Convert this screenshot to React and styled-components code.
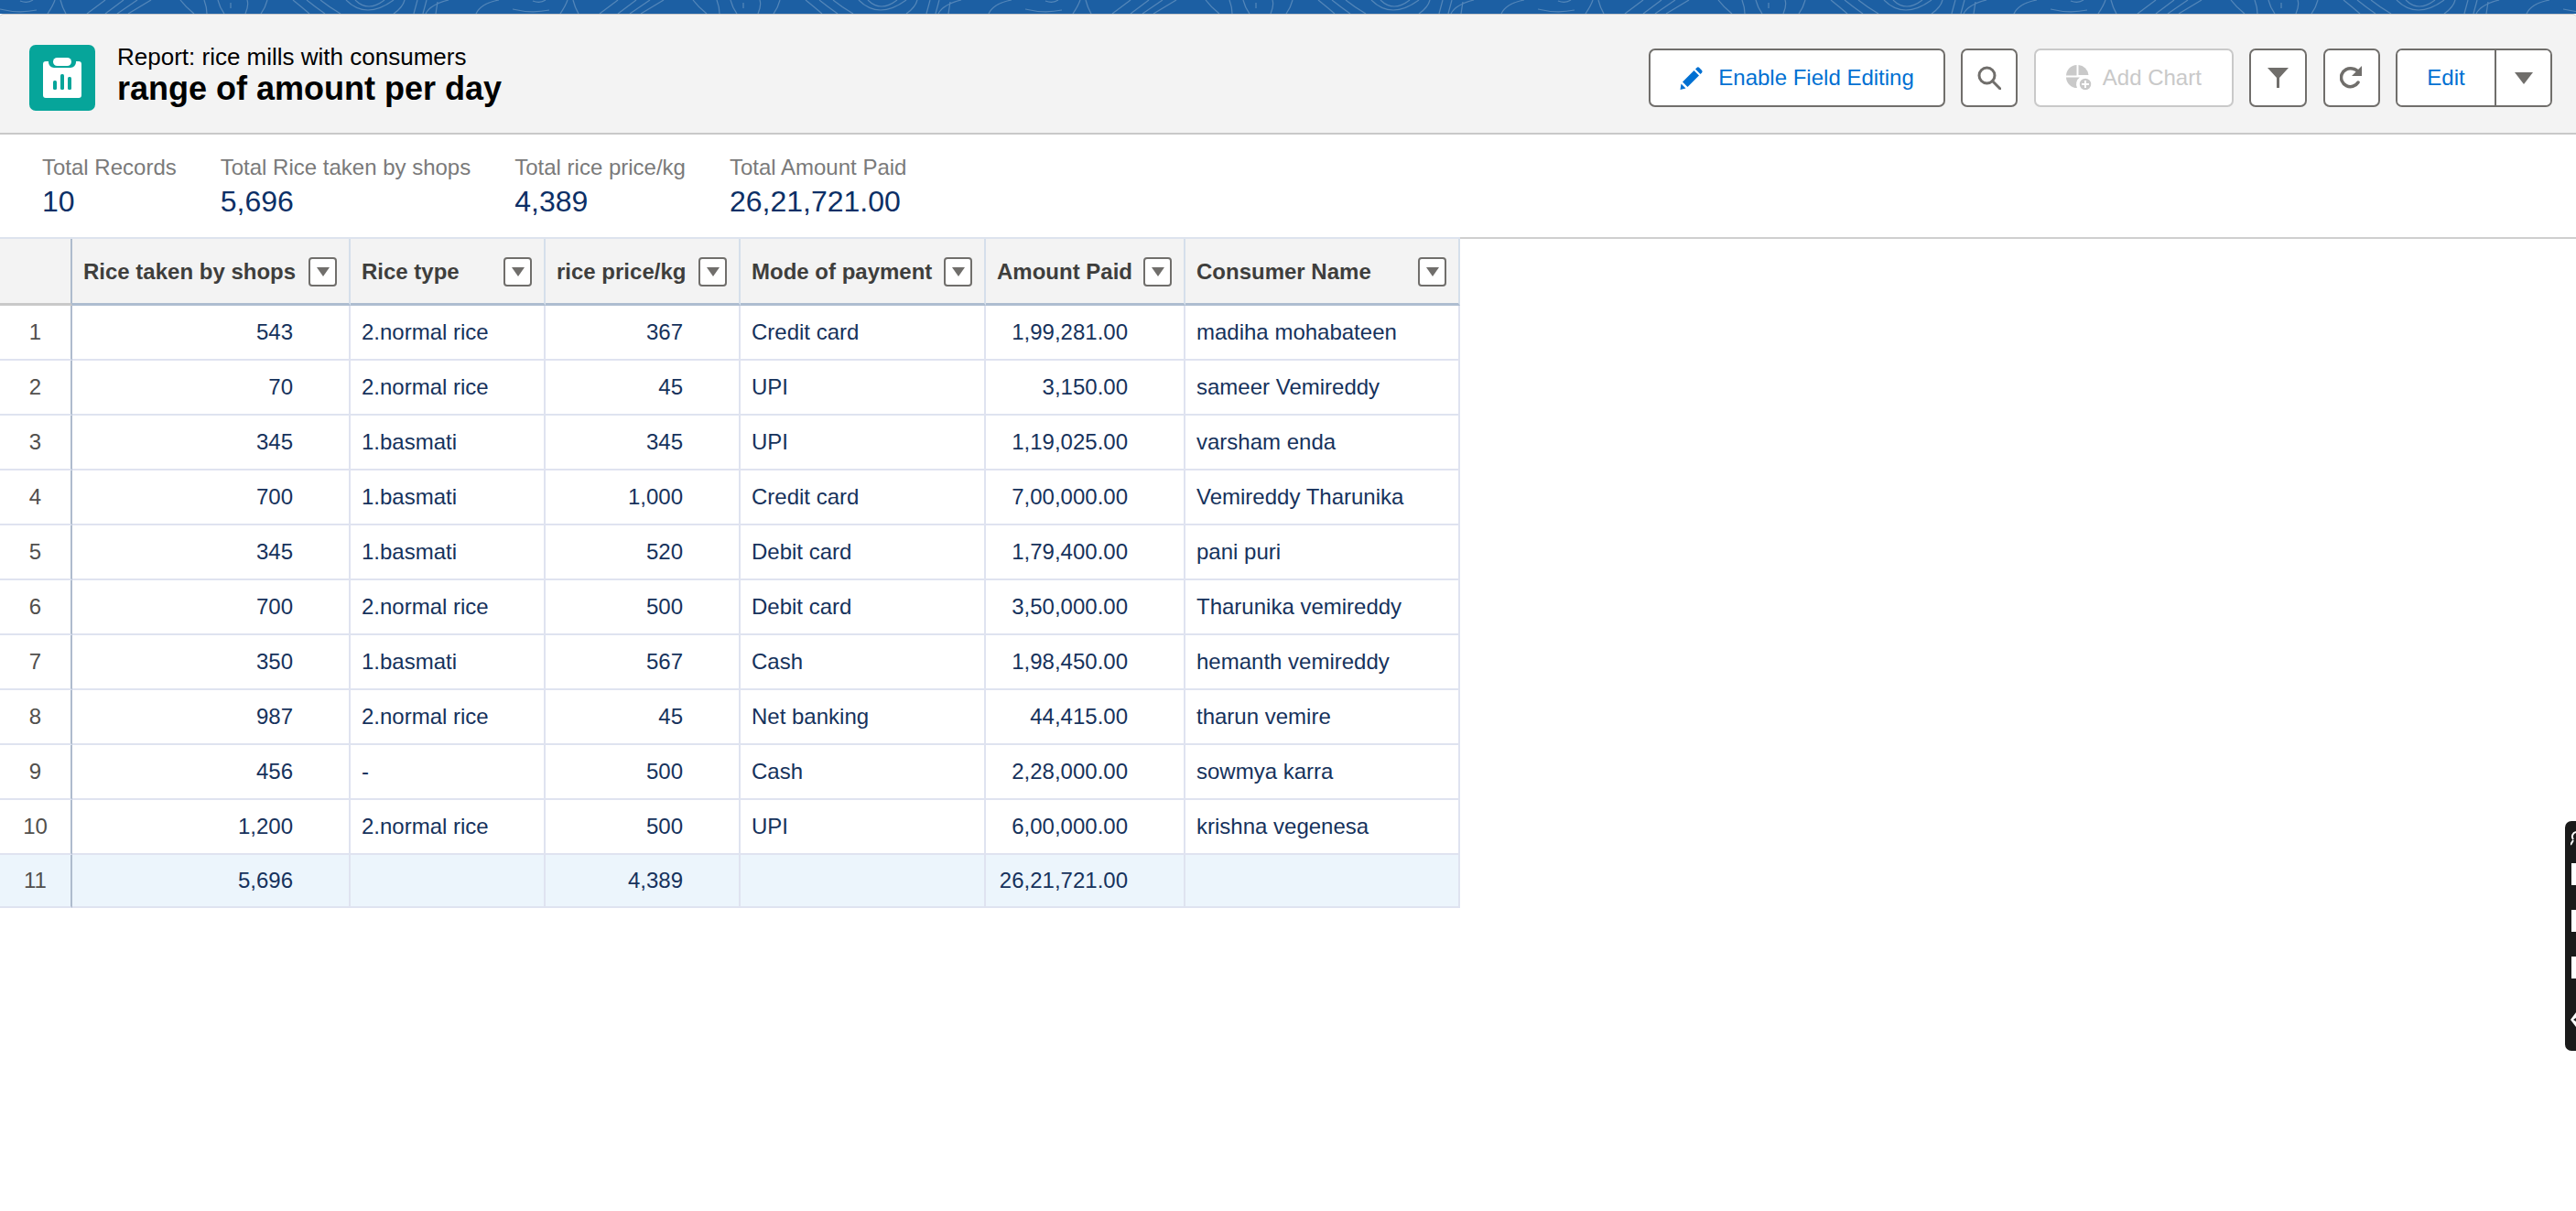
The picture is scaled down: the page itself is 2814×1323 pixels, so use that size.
import React from 'react'
import styled, { createGlobalStyle } from 'styled-components'

const GlobalStyle = createGlobalStyle`
  html, body {
    margin: 0;
    padding: 0;
    background: #fff;
    overflow: hidden;
  }

  body {
    font-family: "Liberation Sans", Arial, sans-serif;
    font-size: 24px;
  }
`

const Page = styled.div`
  position: relative;
  width: 2814px;
  height: 1323px;
  overflow: hidden;
  background: #fff;
`

const Band = styled.svg`
  display: block;
  width: 100%;
  height: 15px;
  background: #1c5fa3;
`

const Header = styled.header`
  display: flex;
  align-items: center;
  justify-content: space-between;
  box-sizing: border-box;
  height: 132px;
  padding: 8px 26px 0 32px;
  background: #f3f3f3;
  border-top: 1px solid #c9c9c9;
  border-bottom: 2px solid #c9c9c9;
  border-radius: 4px 4px 0 0;
`

const TitleBlock = styled.div`
  display: flex;
  align-items: center;
  gap: 24px;
`

const ReportIcon = styled.div`
  display: flex;
  align-items: center;
  justify-content: center;
  width: 72px;
  height: 72px;
  border-radius: 7px;
  background: #06a59a;
`

const TitleText = styled.div`
  display: flex;
  flex-direction: column;
  gap: 2px;
  margin-bottom: 6px;
  color: #000;
`

const Eyebrow = styled.div`
  font-size: 26px;
  line-height: 28px;
`

const Title = styled.h1`
  margin: 0;
  font-size: 36px;
  line-height: 38px;
  font-weight: 700;
`

const Actions = styled.div`
  display: flex;
  gap: 17.4px;
`

const Button = styled.button`
  display: flex;
  align-items: center;
  justify-content: center;
  gap: ${p => p.$gap || 0}px;
  box-sizing: border-box;
  width: ${p => p.$width}px;
  height: 64px;
  padding: 0;
  border: 2px solid ${p => (p.disabled ? '#c9c9c9' : '#706e6b')};
  border-radius: 7px;
  background: #fff;
  color: ${p => (p.disabled ? '#c9c9c9' : '#0070d2')};
  font-family: inherit;
  font-size: 24px;
`

const ButtonGroup = styled.div`
  display: flex;
  box-sizing: border-box;
  width: 171px;
  height: 64px;
  border: 2px solid #706e6b;
  border-radius: 7px;
  background: #fff;
  overflow: hidden;
`

const GroupPart = styled.button`
  display: flex;
  align-items: center;
  justify-content: center;
  flex: ${p => (p.$wide ? '0 0 108px' : '1')};
  padding: 0;
  border: 0;
  border-right: ${p => (p.$wide ? '2px solid #706e6b' : '0')};
  background: #fff;
  color: #0070d2;
  font-family: inherit;
  font-size: 24px;
`

const Stats = styled.section`
  display: flex;
  gap: 48px;
  box-sizing: border-box;
  height: 112px;
  padding: 21px 0 0 46px;
`

const Stat = styled.div`
  display: flex;
  flex-direction: column;
  gap: 3px;
`

const StatLabel = styled.div`
  color: #7a7a7a;
  font-size: 24px;
  line-height: 30px;
`

const StatValue = styled.div`
  color: #0b2f66;
  font-size: 32px;
  line-height: 38px;
`

const TableArea = styled.div`
  border-top: 2px solid #cfcfcf;
`

const Row = styled.div`
  display: grid;
  grid-template-columns: 79px 304px 213px 213px 268px 218px 300px;
  width: 1595px;
  height: ${p => p.$height}px;
  background: ${p => p.$bg || '#fff'};
`

const HeadRow = styled(Row)`
  box-shadow: 0 -2px 0 #dde3ee;
`

const Cell = styled.div`
  display: flex;
  align-items: center;
  justify-content: ${p => (p.$right ? 'flex-end' : 'flex-start')};
  box-sizing: border-box;
  padding: ${p => (p.$right ? '0 61px 1px 0' : '0 0 1px 12px')};
  border-right: 2px solid #dfe3f0;
  border-bottom: 2px solid #dfe3f0;
  color: #16325c;
  font-size: 24px;
`

const RowNumber = styled.div`
  display: flex;
  align-items: center;
  justify-content: center;
  box-sizing: border-box;
  padding-bottom: 1px;
  border-right: 2px solid #aebbcd;
  border-bottom: 2px solid #dfe3f0;
  color: #514f4d;
  font-size: 24px;
`

const HeadCorner = styled.div`
  box-sizing: border-box;
  background: #f3f3f3;
  border-right: 2px solid #aebbcd;
  border-bottom: 3px solid #c9c9c9;
`

const HeadCell = styled.div`
  display: flex;
  align-items: center;
  justify-content: space-between;
  box-sizing: border-box;
  padding: 2px 13px 0 12px;
  background: #f3f3f3;
  border-right: 2px solid #d5dfeb;
  border-bottom: 3px solid #aebdd0;
  color: #3e3e3c;
  font-size: 24px;
  font-weight: 700;
  white-space: nowrap;
`

const MenuButton = styled.span`
  display: flex;
  align-items: center;
  justify-content: center;
  flex: none;
  box-sizing: border-box;
  width: 31px;
  height: 32px;
  border: 2px solid #706e6b;
  border-radius: 4px;
  background: #fff;
`

const Triangle = styled.span`
  width: 0;
  height: 0;
  margin-top: ${p => (p.$big ? 2 : 0)}px;
  border-left: ${p => (p.$big ? 10 : 7)}px solid transparent;
  border-right: ${p => (p.$big ? 10 : 7)}px solid transparent;
  border-top: ${p => (p.$big ? 13 : 10)}px solid #706e6b;
`

const SidePanel = styled.aside`
  position: absolute;
  top: 897px;
  right: 0;
  display: flex;
  flex-direction: column;
  align-items: flex-end;
  box-sizing: border-box;
  width: 12px;
  height: 251px;
  padding-top: 46px;
  border-radius: 7px 0 0 7px;
  background: #1a1a1a;
`

const SideBlock = styled.span`
  display: block;
  width: 5px;
  height: 24px;
  margin-bottom: 27px;
  background: #fff;
`

const SideGlyph = styled.svg`
  position: absolute;
  left: 6px;
  top: ${p => p.$top}px;
  width: 6px;
  height: 16px;
`

const columns = [
  'Rice taken by shops',
  'Rice type',
  'rice price/kg',
  'Mode of payment',
  'Amount Paid',
  'Consumer Name'
]

const rows = [
  ['543', '2.normal rice', '367', 'Credit card', '1,99,281.00', 'madiha mohabateen'],
  ['70', '2.normal rice', '45', 'UPI', '3,150.00', 'sameer Vemireddy'],
  ['345', '1.basmati', '345', 'UPI', '1,19,025.00', 'varsham enda'],
  ['700', '1.basmati', '1,000', 'Credit card', '7,00,000.00', 'Vemireddy Tharunika'],
  ['345', '1.basmati', '520', 'Debit card', '1,79,400.00', 'pani puri'],
  ['700', '2.normal rice', '500', 'Debit card', '3,50,000.00', 'Tharunika vemireddy'],
  ['350', '1.basmati', '567', 'Cash', '1,98,450.00', 'hemanth vemireddy'],
  ['987', '2.normal rice', '45', 'Net banking', '44,415.00', 'tharun vemire'],
  ['456', '-', '500', 'Cash', '2,28,000.00', 'sowmya karra'],
  ['1,200', '2.normal rice', '500', 'UPI', '6,00,000.00', 'krishna vegenesa']
]

const totals = ['5,696', '', '4,389', '', '26,21,721.00', '']
const rightAligned = [true, false, true, false, true, false]

const stats = [
  ['Total Records', '10'],
  ['Total Rice taken by shops', '5,696'],
  ['Total rice price/kg', '4,389'],
  ['Total Amount Paid', '26,21,721.00']
]

const BandPattern = () => (
  <Band aria-hidden="true">
    <defs>
      <pattern id="topo" width="560" height="15" patternUnits="userSpaceOnUse">
        <g fill="none" stroke="#5d8dbd" strokeWidth="1.2" opacity="0.85">
          <path d="M0 10 Q20 15 40 11 M22 1 Q30 4 36 0" />
          <path d="M52 15 Q58 6 60 0 M66 0 Q68 8 72 15" />
          <path d="M95 15 L115 0 M115 15 L135 0 M128 15 L150 0 M140 15 L165 0" />
          <path d="M197 0 Q203 8 212 15 M223 0 Q226 8 226 15 M238 0 Q240 8 245 15" />
          <path d="M252 3 L252 9 M268 15 Q272 6 270 0 M285 15 Q290 8 292 0" />
          <path d="M320 0 Q330 8 338 15 M335 0 Q345 8 355 15 M350 0 Q360 8 372 15" />
          <path d="M378 0 Q400 22 430 0 M388 0 Q402 14 420 0" />
          <path d="M430 15 Q440 8 442 0 M452 15 L456 0 M462 15 L466 0 M476 15 L478 2" />
          <path d="M465 15 Q470 5 490 0 M520 15 Q525 4 545 0" />
        </g>
      </pattern>
    </defs>
    <rect width="100%" height="15" fill="url(#topo)" />
  </Band>
)

const ClipboardIcon = () => (
  <svg width="42" height="44" viewBox="0 0 42 44">
    <path
      fill="#fff"
      d="M3 4 h3 v1 a6 6 0 0 0 6 6 h18 a6 6 0 0 0 6 -6 v-1 h3 a3 3 0 0 1 3 3 v34 a3 3 0 0 1 -3 3 h-36 a3 3 0 0 1 -3 -3 v-34 a3 3 0 0 1 3 -3 z"
    />
    <rect x="11" y="0" width="20" height="9" rx="4.5" fill="#fff" />
    <rect x="11" y="25" width="4" height="10" rx="1.5" fill="#06a59a" />
    <rect x="19" y="18" width="4" height="17" rx="1.5" fill="#06a59a" />
    <rect x="27" y="21" width="4" height="14" rx="1.5" fill="#06a59a" />
  </svg>
)

const PencilIcon = () => (
  <svg width="26" height="26" viewBox="0 0 26 26" fill="#0070d2">
    <path d="M3 17.5 L15.5 5 L21 10.5 L8.5 23 Z" />
    <path d="M0.5 26 L1.5 19.5 L6.5 24.5 Z" />
    <path d="M17 3.5 L18.5 2 a2 2 0 0 1 2.8 0 L24 4.7 a2 2 0 0 1 0 2.8 L22.5 9 Z" />
  </svg>
)

const SearchIcon = () => (
  <svg width="26" height="26" viewBox="0 0 26 26" fill="none" stroke="#706e6b" strokeWidth="3">
    <circle cx="10.5" cy="10.5" r="8.5" />
    <path d="M16.5 16.5 L25 25" strokeLinecap="round" />
  </svg>
)

const ChartIcon = () => (
  <svg width="28" height="28" viewBox="0 0 28 28" fill="#c9c9c9">
    <path d="M11.5 0 A12 12 0 0 0 0 11.5 H11.5 Z" />
    <path d="M13.5 0 A12 12 0 0 1 24.5 11 H13.5 Z" />
    <path d="M0 13.5 A12 12 0 0 0 12 25 A9 9 0 0 1 15 13.5 Z" />
    <circle cx="21" cy="21" r="7" stroke="#fff" strokeWidth="1.5" />
    <path d="M21 17 V25 M17 21 H25" stroke="#fff" strokeWidth="2" />
  </svg>
)

const FilterIcon = () => (
  <svg width="23" height="22" viewBox="0 0 23 22" fill="#706e6b">
    <path d="M0 0 H23 L13 11 V22 H10 V11 Z" />
  </svg>
)

const RefreshIcon = () => (
  <svg width="25" height="25" viewBox="0 0 25 25" fill="none">
    <path d="M20 18 A10 10 0 1 1 14 3 C17 3.4 19 5 20.5 7" stroke="#706e6b" strokeWidth="3.5" strokeLinecap="round" />
    <path d="M24 0 V11 H13 Z" fill="#706e6b" />
  </svg>
)

export default function App() {
  return (
    <Page>
      <GlobalStyle />
      <BandPattern />
      <Header>
        <TitleBlock>
          <ReportIcon>
            <ClipboardIcon />
          </ReportIcon>
          <TitleText>
            <Eyebrow>Report: rice mills with consumers</Eyebrow>
            <Title>range of amount per day</Title>
          </TitleText>
        </TitleBlock>
        <Actions>
          <Button $width={324} $gap={16}>
            <PencilIcon />
            Enable Field Editing
          </Button>
          <Button $width={62}>
            <SearchIcon />
          </Button>
          <Button $width={218} $gap={12} disabled>
            <ChartIcon />
            Add Chart
          </Button>
          <Button $width={63}>
            <FilterIcon />
          </Button>
          <Button $width={62}>
            <RefreshIcon />
          </Button>
          <ButtonGroup>
            <GroupPart $wide>Edit</GroupPart>
            <GroupPart>
              <Triangle $big />
            </GroupPart>
          </ButtonGroup>
        </Actions>
      </Header>
      <Stats>
        {stats.map(([label, value]) => (
          <Stat key={label}>
            <StatLabel>{label}</StatLabel>
            <StatValue>{value}</StatValue>
          </Stat>
        ))}
      </Stats>
      <TableArea>
        <HeadRow $height={73}>
          <HeadCorner />
          {columns.map(name => (
            <HeadCell key={name}>
              {name}
              <MenuButton>
                <Triangle />
              </MenuButton>
            </HeadCell>
          ))}
        </HeadRow>
        {rows.map((row, i) => (
          <Row key={i} $height={60}>
            <RowNumber>{i + 1}</RowNumber>
            {row.map((value, c) => (
              <Cell key={c} $right={rightAligned[c]}>{value}</Cell>
            ))}
          </Row>
        ))}
        <Row $height={58} $bg="#ecf5fc">
          <RowNumber>11</RowNumber>
          {totals.map((value, c) => (
            <Cell key={c} $right={rightAligned[c]}>{value}</Cell>
          ))}
        </Row>
      </TableArea>
      <SidePanel>
        <SideGlyph $top={11} viewBox="0 0 6 16" fill="none" stroke="#fff" strokeWidth="2">
          <path d="M6 1 A5 5 0 0 0 3 9 M3 10 L0 15" />
        </SideGlyph>
        <SideBlock />
        <SideBlock />
        <SideBlock />
        <SideGlyph $top={209} viewBox="0 0 6 16" fill="#fff">
          <path d="M6 0 V6 L3 8 L6 10 V16 L0 8 Z" />
        </SideGlyph>
      </SidePanel>
    </Page>
  )
}
